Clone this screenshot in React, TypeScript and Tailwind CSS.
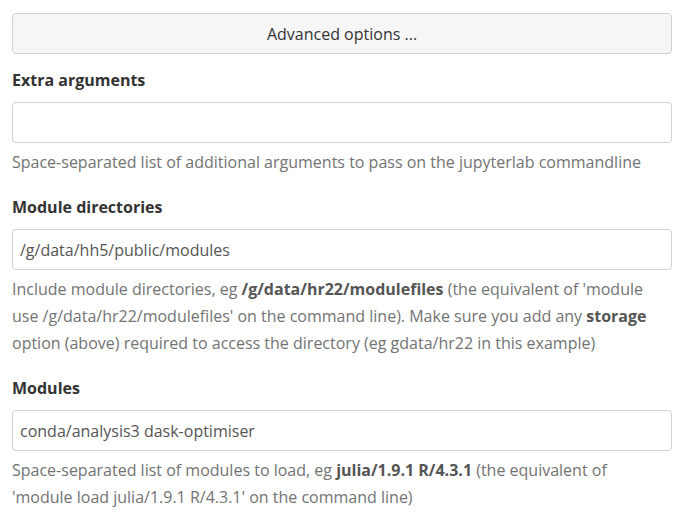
import React from 'react';

const font = { fontFamily: '"Open Sans", "Noto Sans", sans-serif' };

function Field({ label, value, children }: { label: string; value?: string; children: React.ReactNode }) {
  return (
    <div className="mb-[18px]">
      <div className="font-bold text-[#333] leading-[27px] mb-[8px]">{label}</div>
      <input
        type="text"
        defaultValue={value}
        className="block w-full h-[41px] border border-[#d0d0d0] rounded-[4px] px-[7px] text-[#555] bg-white outline-none"
      />
      <div className="mt-[6px] mr-[6px] text-[#737373] leading-[27px]">{children}</div>
    </div>
  );
}

export default function App() {
  return (
    <div className="bg-white text-[16px] pl-[12px] pr-[19px] pt-[13px]" style={font}>
      <button className="block w-full h-[41px] bg-[#f6f6f6] border border-[#d0d0d0] rounded-[4px] text-[#333] mb-[13px]">
        Advanced options ...
      </button>
      <Field label="Extra arguments">
        Space-separated list of additional arguments to pass on the jupyterlab commandline
      </Field>
      <Field label="Module directories" value="/g/data/hh5/public/modules">
        Include module directories, eg <b className="text-[#555]">/g/data/hr22/modulefiles</b> (the equivalent of 'module use
        /g/data/hr22/modulefiles' on the command line). Make sure you add any <b className="text-[#555]">storage</b> option
        (above) required to access the directory (eg gdata/hr22 in this example)
      </Field>
      <Field label="Modules" value="conda/analysis3 dask-optimiser">
        Space-separated list of modules to load, eg <b className="text-[#555]">julia/1.9.1 R/4.3.1</b> (the equivalent of
        'module load julia/1.9.1 R/4.3.1' on the command line)
      </Field>
    </div>
  );
}
